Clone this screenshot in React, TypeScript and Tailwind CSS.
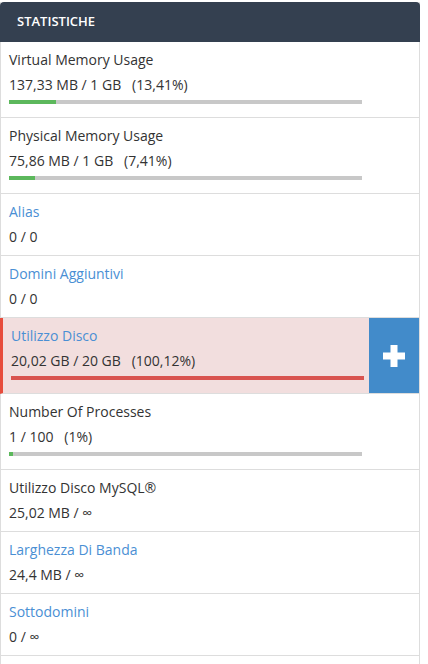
import React from "react";

type Stat = {
  title: string;
  value: string;
  pct?: string;
  link?: boolean;
  bar?: number;
  danger?: boolean;
};

const stats: Stat[] = [
  { title: "Virtual Memory Usage", value: "137,33 MB / 1 GB", pct: "(13,41%)", bar: 13.41 },
  { title: "Physical Memory Usage", value: "75,86 MB / 1 GB", pct: "(7,41%)", bar: 7.41 },
  { title: "Alias", value: "0 / 0", link: true },
  { title: "Domini Aggiuntivi", value: "0 / 0", link: true },
  { title: "Utilizzo Disco", value: "20,02 GB / 20 GB", pct: "(100,12%)", link: true, bar: 100, danger: true },
  { title: "Number Of Processes", value: "1 / 100", pct: "(1%)", bar: 1 },
  { title: "Utilizzo Disco MySQL®", value: "25,02 MB / ∞" },
  { title: "Larghezza Di Banda", value: "24,4 MB / ∞", link: true },
  { title: "Sottodomini", value: "0 / ∞", link: true },
];

function StatRow({ s }: { s: Stat }) {
  return (
    <div
      className={`flex border-b border-[#dddddd] ${s.danger ? "bg-[#f2dede] border-l-[3px] border-l-[#e74c3c] -ml-px" : ""}`}
    >
      <div className={`flex-1 pt-2 pl-[8px] ${s.bar !== undefined ? "pb-[13px]" : "pb-2"}`}>
        <div className={`text-[14px] leading-5 ${s.link ? "text-[#4a8fd4]" : "text-[#333333]"}`}>{s.title}</div>
        <div className="mt-[5px] text-[14px] leading-5 text-[#333333] whitespace-pre">
          {s.value}
          {s.pct ? `   ${s.pct}` : ""}
        </div>
        {s.bar !== undefined && (
          <div className="mt-[5px] h-[4px] w-[353px] bg-[#c8c8c8]">
            <div
              className={`h-full ${s.danger ? "bg-[#d9534f]" : "bg-[#5cb85c]"}`}
              style={{ width: `${Math.min(s.bar, 100)}%` }}
            />
          </div>
        )}
      </div>
      {s.danger && (
        <button className="w-[50px] bg-[#428bca] flex items-center justify-center">
          <svg width="26" height="26" viewBox="0 0 26 26">
            <path d="M9.5 2h7v7.5H24v7h-7.5V24h-7v-7.5H2v-7h7.5z" fill="#ffffff" />
          </svg>
        </button>
      )}
    </div>
  );
}

export default function App() {
  return (
    <div className="w-[428px] h-[664px] overflow-hidden bg-white font-['Open_Sans',sans-serif]">
      <div className="w-[420px] mt-[2px] border-x border-[#dddddd]">
        <div className="h-[40px] bg-[#344050] rounded-t-[4px] flex items-center px-[17px] -mx-px">
          <span className="text-white text-[13px] font-semibold uppercase">Statistiche</span>
        </div>
        {stats.map((s) => (
          <StatRow key={s.title} s={s} />
        ))}
        <div className="h-[20px]" />
      </div>
    </div>
  );
}
